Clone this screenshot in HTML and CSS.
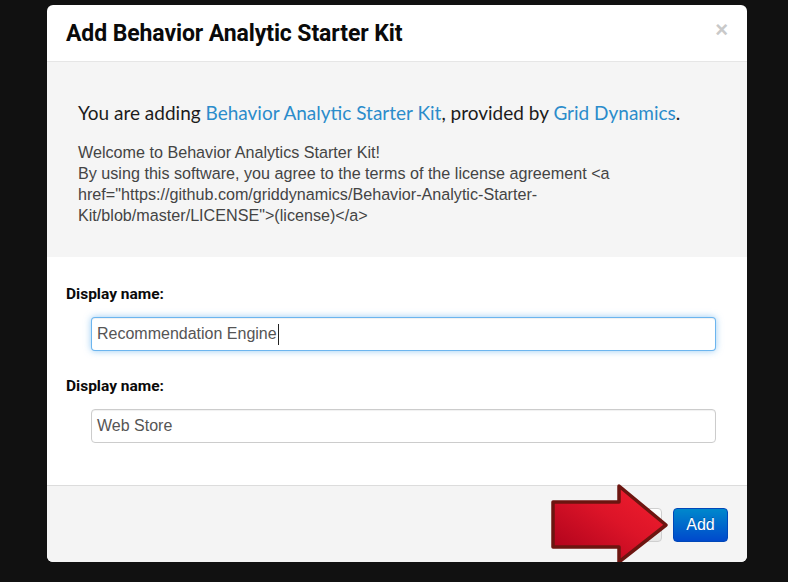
FILE: index.html
```html
<!DOCTYPE html>
<html>
<head>
<meta charset="utf-8">
<title>Add Behavior Analytic Starter Kit</title>
<link rel="stylesheet" href="styles.css">
</head>
<body>
<div class="modal">
  <div class="modal-header">
    <h3 class="modal-title">Add Behavior Analytic Starter Kit</h3>
    <span class="close">×</span>
  </div>
  <div class="modal-info">
    <p class="intro">You are adding <a href="#">Behavior Analytic Starter Kit</a>, provided by <a href="#">Grid Dynamics</a>.</p>
    <p class="desc">Welcome to Behavior Analytics Starter Kit!<br>By using this software, you agree to the terms of the license agreement &lt;a<br>href="https://github.com/griddynamics/Behavior-Analytic-Starter-<br>Kit/blob/master/LICENSE"&gt;(license)&lt;/a&gt;</p>
  </div>
  <div class="modal-form">
    <div class="field">
      <label class="field-label">Display name:</label>
      <div class="input focused">Recommendation Engine<span class="caret"></span></div>
    </div>
    <div class="field">
      <label class="field-label">Display name:</label>
      <div class="input">Web Store</div>
    </div>
  </div>
  <div class="modal-footer">
    <button class="btn">Cancel</button>
    <button class="btn btn-primary">Add</button>
  </div>
  <svg class="arrow" width="124" height="84" viewBox="0 0 124 84">
    <defs>
      <linearGradient id="ag" x1="0" y1="1" x2="1" y2="0">
        <stop offset="0" stop-color="#a8001a"/>
        <stop offset="0.55" stop-color="#dc1428"/>
        <stop offset="1" stop-color="#f4202f"/>
      </linearGradient>
    </defs>
    <path d="M5,20 L71,20 L71,4 L118,43 L71,80 L71,65 L5,65 Z" fill="url(#ag)" stroke="#6c1510" stroke-width="3.5" stroke-linejoin="round"/>
  </svg>
</div>
</body>
</html>
```
FILE: styles.css
```css
html, body {
  margin: 0;
  padding: 0;
  background: #111111;
  height: 100%;
}
body {
  padding-top: 5px;
  font-family: "Liberation Sans", Arial, sans-serif;
}
.modal {
  position: relative;
  margin-left: 47px;
  width: 700px;
  height: 557px;
  background: #ffffff;
  border-radius: 6px;
  overflow: hidden;
  display: flex;
  flex-direction: column;
}
.modal-header {
  display: flex;
  justify-content: space-between;
  align-items: flex-start;
  padding: 15px 19px 14px 19px;
  border-bottom: 1px solid #e6e6e6;
}
.modal-title {
  margin: 0;
  font-family: Roboto, sans-serif;
  font-weight: 700;
  font-size: 23px;
  line-height: 27px;
  letter-spacing: -0.1px;
  color: #0a0a0a;
}
.close {
  font-family: "Liberation Sans", Arial, sans-serif;
  font-weight: 700;
  font-size: 22px;
  line-height: 22px;
  color: #c9c9c9;
  margin-top: -1px;
}
.modal-info {
  background: #f5f5f5;
  padding: 39px 31px 0 31px;
  height: 195px;
  box-sizing: border-box;
}
.intro {
  margin: 0;
  font-family: Lato, sans-serif;
  font-size: 19px;
  line-height: 23px;
  color: #1c1c1c;
}
.intro a {
  color: #2b8ccb;
  text-decoration: none;
}
.desc {
  margin: 18px 0 0 0;
  font-size: 16.15px;
  line-height: 21px;
  color: #444444;
}
.modal-form {
  flex: 1;
  padding: 28px 31px 0 19px;
  border-bottom: 1px solid #dcdcdc;
}
.field {
  display: flex;
  flex-direction: column;
  margin-bottom: 26px;
}
.field-label {
  font-family: Roboto, sans-serif;
  font-weight: 700;
  font-size: 15.5px;
  line-height: 19px;
  color: #0a0a0a;
  margin-bottom: 13px;
}
.input {
  margin-left: 25px;
  width: 625px;
  height: 34px;
  box-sizing: border-box;
  border: 1px solid #cccccc;
  border-radius: 4px;
  padding: 0 5px;
  font-size: 16px;
  line-height: 32px;
  color: #555555;
  background: #ffffff;
  box-shadow: inset 0 1px 1px rgba(0,0,0,0.06);
  display: flex;
  align-items: center;
}
.input.focused {
  border-color: rgba(82,168,236,0.85);
  box-shadow: inset 0 1px 1px rgba(0,0,0,0.06), 0 0 7px rgba(82,168,236,0.6);
}
.caret {
  display: inline-block;
  width: 1px;
  height: 21px;
  background: #222222;
  margin-left: 1px;
}
.modal-footer {
  height: 76px;
  box-sizing: border-box;
  background: #f4f4f4;
  display: flex;
  justify-content: flex-end;
  align-items: flex-start;
  gap: 11px;
  padding: 22px 19px 0 0;
}
.btn {
  height: 34px;
  padding: 0 13px;
  border-radius: 4px;
  font-family: "Liberation Sans", Arial, sans-serif;
  font-size: 16px;
  border: 1px solid #cfcfcf;
  background: linear-gradient(#ffffff, #e6e6e6);
  color: #333333;
}
.btn-primary {
  width: 55px;
  padding: 0;
  color: #ffffff;
  border: 1px solid #0047b8;
  background: linear-gradient(#0088cc, #0049cc);
  text-shadow: 0 -1px 0 rgba(0,0,0,0.25);
}
.arrow {
  position: absolute;
  left: 501px;
  top: 477px;
}
```
